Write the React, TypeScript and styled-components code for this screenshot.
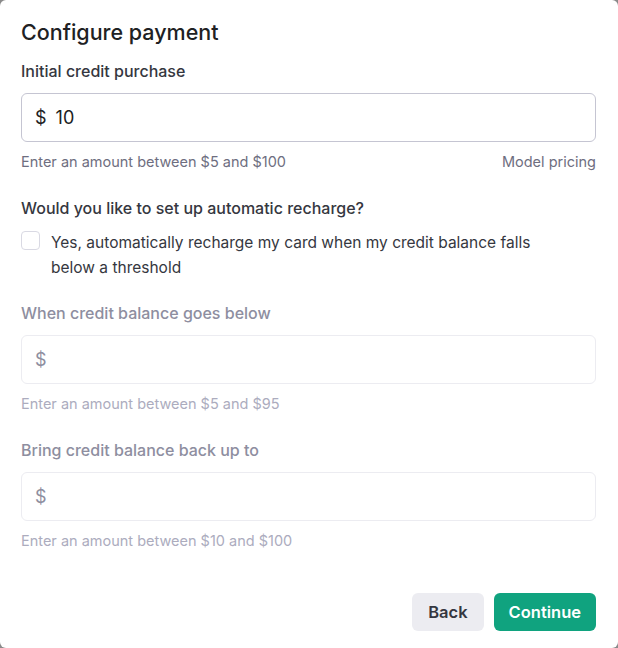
import React from "react";
import styled, { createGlobalStyle } from "styled-components";

const Global = createGlobalStyle`
  html, body { margin: 0; padding: 0; background: #8a8a8a; }
  body { font-family: Inter, "Noto Sans", sans-serif; -webkit-font-smoothing: antialiased; }
  * { box-sizing: border-box; }
`;

const Dialog = styled.div`
  width: 618px;
  height: 648px;
  background: #fff;
  border-radius: 6px;
  padding: 18px 22px 0 21px;
  display: flex;
  flex-direction: column;
  color: #202123;
`;

const Title = styled.h2`
  margin: 0;
  font-size: 21.5px;
  line-height: 28px;
  font-weight: 500;
  color: #202123;
`;

const Label = styled.div<{ $muted?: boolean; $top: number }>`
  margin-top: ${(p) => p.$top}px;
  font-size: 16px;
  line-height: 22px;
  font-weight: 500;
  color: ${(p) => (p.$muted ? "#8e8ea0" : "#353740")};
`;

const InputBox = styled.div<{ $disabled?: boolean }>`
  margin-top: 11px;
  height: 49px;
  border: 1px solid ${(p) => (p.$disabled ? "#ececf1" : "#c5c5d2")};
  border-radius: 6px;
  display: flex;
  align-items: center;
  padding: 0 13px;
  gap: 9px;
  font-size: 18px;
  color: ${(p) => (p.$disabled ? "#8e8ea0" : "#202123")};
`;

const Currency = styled.span`
  font-size: 18px;
`;

const Helper = styled.div<{ $muted?: boolean }>`
  margin-top: 10px;
  display: flex;
  justify-content: space-between;
  font-size: 14.5px;
  line-height: 20px;
  color: ${(p) => (p.$muted ? "#acacbe" : "#6e6e80")};
`;

const CheckRow = styled.label`
  margin-top: 11px;
  display: flex;
  align-items: flex-start;
  gap: 11px;
  font-size: 15.5px;
  line-height: 25px;
  color: #353740;
`;

const Box = styled.span`
  flex: none;
  width: 19px;
  height: 19px;
  margin-top: 1px;
  border: 1px solid #d9d9e3;
  border-radius: 4px;
  background: #fff;
`;

const CheckText = styled.span`
  max-width: 495px;
`;

const Footer = styled.div`
  margin-top: auto;
  margin-bottom: 17px;
  display: flex;
  justify-content: flex-end;
  gap: 10px;
`;

const Button = styled.button<{ $primary?: boolean }>`
  height: 38px;
  border: none;
  border-radius: 6px;
  padding: 0 ${(p) => (p.$primary ? 15 : 16)}px;
  font-family: inherit;
  font-size: 16.5px;
  font-weight: 600;
  background: ${(p) => (p.$primary ? "#10a37f" : "#ececf1")};
  color: ${(p) => (p.$primary ? "#fff" : "#353740")};
`;

export default function App() {
  return (
    <>
      <Global />
      <Dialog>
        <Title>Configure payment</Title>
        <Label $top={14}>Initial credit purchase</Label>
        <InputBox>
          <Currency>$</Currency>
          <span>10</span>
        </InputBox>
        <Helper>
          <span>Enter an amount between $5 and $100</span>
          <span>Model pricing</span>
        </Helper>
        <Label $top={25}>Would you like to set up automatic recharge?</Label>
        <CheckRow>
          <Box />
          <CheckText>Yes, automatically recharge my card when my credit balance falls below a threshold</CheckText>
        </CheckRow>
        <Label $muted $top={22}>When credit balance goes below</Label>
        <InputBox $disabled>
          <Currency>$</Currency>
        </InputBox>
        <Helper $muted>
          <span>Enter an amount between $5 and $95</span>
        </Helper>
        <Label $muted $top={25}>Bring credit balance back up to</Label>
        <InputBox $disabled>
          <Currency>$</Currency>
        </InputBox>
        <Helper $muted>
          <span>Enter an amount between $10 and $100</span>
        </Helper>
        <Footer>
          <Button>Back</Button>
          <Button $primary>Continue</Button>
        </Footer>
      </Dialog>
    </>
  );
}
